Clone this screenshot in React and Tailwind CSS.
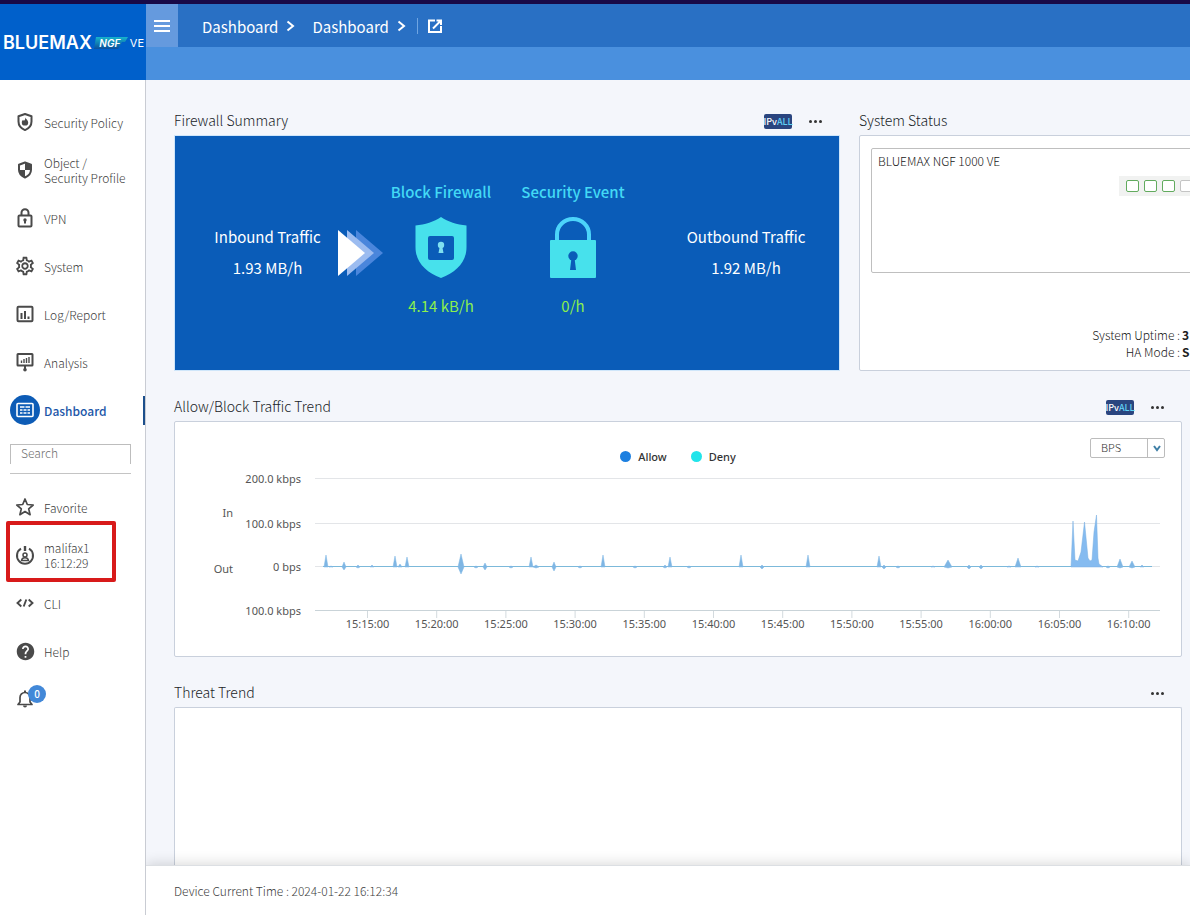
import React, { useState } from "react";
import { MdHelp, MdOutlineSettings } from "react-icons/md";

const stroke = {
  fill: "none",
  stroke: "currentColor",
  strokeWidth: 2,
  strokeLinejoin: "round",
};

const PolicyIcon = () => (
  <svg width="20" height="20" viewBox="0 0 20 20">
    <path d="M10 2l6.5 2.3v5.2c0 4-2.6 7-6.5 8.6-3.9-1.6-6.5-4.6-6.5-8.6V4.300z" {...stroke} />
    <path d="M10.600 5.500c.2 1.600 2.600 2.700 2.600 4.900a3.200 3.200 0 0 1-6.400 0c0-1.200.6-2 1.300-2.700.2.700.5 1 .9 1 .9-.4 1.300-1.800 1.600-3.200z" fill="currentColor" />
  </svg>
);

const ProfileIcon = () => (
  <svg width="20" height="20" viewBox="0 0 20 20">
    <path d="M10 2.500l6 2.300v5c0 3.800-2.400 6.200-6 7.700-3.600-1.500-6-3.900-6-7.700v-5z" {...stroke} />
    <path d="M10 3l6 2v5h-6zM10 10v7.300C6 15.800 4 13.500 4 10z" fill="currentColor" />
  </svg>
);

const LockIcon = () => (
  <svg width="20" height="20" viewBox="0 0 20 20">
    <rect x="3.500" y="7.500" width="13" height="11" rx="1" {...stroke} />
    <path d="M6.500 7V4.800a3.500 3.500 0 0 1 7 0V7" {...stroke} />
    <circle cx="10" cy="12" r="1.700" fill="currentColor" />
    <path d="M10 12v3.500" {...stroke} />
  </svg>
);

const ReportIcon = () => (
  <svg width="20" height="20" viewBox="0 0 20 20">
    <rect x="2.500" y="2.800" width="15" height="14.400" rx="1" {...stroke} />
    <path d="M6.500 9v6M10 7v8M13.500 12.500V15" {...stroke} />
  </svg>
);

const AnalysisIcon = () => (
  <svg width="20" height="20" viewBox="0 0 20 20">
    <rect x="2.500" y="2" width="15" height="11.500" rx="0.500" {...stroke} />
    <path d="M6.500 8.500V11M9 7v4M11.500 6v5M14 5v6" {...stroke} strokeWidth="1.400" />
    <path d="M10 13.500V18" {...stroke} />
    <circle cx="10" cy="17.800" r="1.800" fill="currentColor" />
  </svg>
);

const DashboardIcon = () => (
  <svg width="20" height="20" viewBox="0 0 20 20" className="text-white">
    <rect x="2" y="3.500" width="16" height="13" rx="1" {...stroke} strokeWidth="1.600" />
    <path d="M5 7h4.500M10.500 7H15M5 10h2.500M8.500 10h3M12.500 10H15M5 13h2.500M8.500 13h3M12.500 13H15" {...stroke} strokeWidth="1.400" />
  </svg>
);

const StarIcon = () => (
  <svg width="20" height="20" viewBox="0 0 20 20">
    <path d="M10 2l2.300 5.500 5.900.5-4.500 3.900 1.400 5.800L10 14.600l-5.100 3.100 1.400-5.800L1.800 8l5.900-.5z" {...stroke} strokeWidth="1.700" />
  </svg>
);

const UserPowerIcon = () => (
  <svg width="20" height="20" viewBox="0 0 20 20">
    <path d="M6 3.700a8 8 0 1 0 8 0" {...stroke} />
    <path d="M10 1v5" {...stroke} strokeWidth="2.400" />
    <circle cx="10" cy="10" r="2" {...stroke} strokeWidth="1.500" />
    <path d="M6.500 15.500c.3-2 1.600-2.800 3.500-2.800s3.200.8 3.500 2.800z" {...stroke} strokeWidth="1.500" />
  </svg>
);

const CodeIcon = () => (
  <svg width="20" height="20" viewBox="0 0 20 20">
    <path d="M6.300 6.500L2.500 10l3.800 3.500M13.700 6.500l3.800 3.500-3.800 3.500M11.300 6.500l-2.600 7" {...stroke} strokeWidth="1.900" strokeLinejoin="miter" />
  </svg>
);

const BellIcon = () => (
  <svg width="20" height="20" viewBox="0 0 20 20">
    <path d="M3 15.500h14l-2-2.500V8.500a5 5 0 0 0-10 0V13z" {...stroke} strokeWidth="1.700" />
    <path d="M10 1.500v2" {...stroke} />
    <path d="M8 16.500a2 2 0 0 0 4 0z" fill="currentColor" />
  </svg>
);

const mainMenu = [
  { label: "Security Policy", icon: <PolicyIcon /> },
  { label: "Object /\nSecurity Profile", icon: <ProfileIcon /> },
  { label: "VPN", icon: <LockIcon /> },
  { label: "System", icon: <MdOutlineSettings size={22} /> },
  { label: "Log/Report", icon: <ReportIcon /> },
  { label: "Analysis", icon: <AnalysisIcon /> },
  { label: "Dashboard", icon: <DashboardIcon />, active: true },
];

const userMenu = [
  { label: "Favorite", icon: <StarIcon /> },
  { label: "malifax1\n16:12:29", icon: <UserPowerIcon />, marked: true },
  { label: "CLI", icon: <CodeIcon /> },
  { label: "Help", icon: <MdHelp size={21} /> },
];

const MenuItem = ({ item }) => (
  <li className="relative">
    <a
      href="#"
      className={`flex h-12 items-center gap-1 pl-[10px] text-xs leading-[15px] ${
        item.active ? "font-medium text-[#1c56a8]" : "font-light text-[#404040]"
      }`}
    >
      <span
        className={`flex size-[30px] shrink-0 items-center justify-center rounded-full ${
          item.active ? "bg-[#0d5cb6]" : "text-[#4a4a4a]"
        }`}
      >
        {item.icon}
      </span>
      <span className="whitespace-pre">{item.label}</span>
    </a>
    {item.active && <span className="absolute right-0 top-[10px] h-[29px] w-[2px] bg-[#1c4f8c]" />}
    {item.marked && (
      <span className="absolute -top-[10px] left-[6px] h-[61px] w-[110px] rounded-xs border-4 border-[#d81a1a]" />
    )}
  </li>
);

const Sidebar = () => (
  <aside className="flex w-[146px] shrink-0 flex-col border-r border-[#c9ccd3] bg-white">
    <nav className="pt-[18px]">
      <ul>
        {mainMenu.map((item) => (
          <MenuItem key={item.label} item={item} />
        ))}
      </ul>
    </nav>
    <div className="ml-[10px] mr-[14px] mt-[10px] border-b border-[#c4c4c4] pb-[9px]">
      <input
        type="text"
        aria-label="Search"
        placeholder="Search"
        className="block h-5 w-full border border-b-0 border-[#bdbdbd] px-[10px] pb-1 text-xs font-light leading-none text-[#404040] outline-none placeholder:text-[#707070]"
      />
    </div>
    <ul className="pt-[9px]">
      {userMenu.map((item) => (
        <MenuItem key={item.label} item={item} />
      ))}
      <li>
        <button aria-label="Notifications" className="relative flex h-12 items-center pl-[15px] text-[#4a4a4a]">
          <BellIcon />
          <span className="absolute left-7 top-[10px] flex size-[18px] items-center justify-center rounded-full bg-[#4288d8] text-[10px] font-medium leading-none text-white">
            0
          </span>
        </button>
      </li>
    </ul>
  </aside>
);

const Crumb = ({ children }) => (
  <a href="#" className="flex items-center gap-2">
    {children}
    <svg width="9" height="12" viewBox="0 0 9 12">
      <path d="M1.500 1.500L7 6l-5.500 4.500" fill="none" stroke="currentColor" strokeWidth="2" />
    </svg>
  </a>
);

const Header = () => (
  <header className="flex h-20 shrink-0 border-t-4 border-[#180a48]">
    <div className="flex w-[146px] shrink-0 items-center bg-[#0060cb] pl-[3px] pt-[2px] font-['Inter',sans-serif] text-white">
      <span className="text-lg font-semibold leading-none">BLUEMAX</span>
      <span className="relative flex h-3 w-[36px] shrink-0 items-center justify-center text-[10px] font-semibold italic leading-none">
        <svg viewBox="0 0 36 12" className="absolute inset-0 size-full">
          <defs>
            <linearGradient id="ngf" x1="0" y1="0" x2="0" y2="1">
              <stop offset="0" stopColor="#18b4cc" />
              <stop offset="1" stopColor="#0b4f9c" />
            </linearGradient>
          </defs>
          <path d="M4 0h32l-3 5h-3l-4 7H2z" fill="url(#ngf)" />
        </svg>
        <span className="relative">NGF</span>
      </span>
      <span className="pl-[2px] text-[11px] leading-none">VE</span>
    </div>
    <div className="flex min-w-0 flex-1 items-start bg-[#4a90de]">
      <button aria-label="Toggle menu" className="flex h-[43px] w-8 shrink-0 items-center justify-center bg-[#659ade]">
        <span className="flex w-4 flex-col gap-[3px]">
          <span className="h-[2px] bg-white" />
          <span className="h-[2px] bg-white" />
          <span className="h-[2px] bg-white" />
        </span>
      </button>
      <div className="flex h-[43px] flex-1 items-center gap-[17px] bg-[#2970c4] pl-6 pt-px text-[15px] leading-none text-white">
        <Crumb>Dashboard</Crumb>
        <Crumb>Dashboard</Crumb>
        <a href="#" aria-label="Open in new window" className="-ml-[6px] flex h-4 items-center border-l border-[#6fa5e2] pl-[10px]">
          <svg width="14" height="14" viewBox="0 0 14 14" fill="none" stroke="currentColor" strokeWidth="2">
            <path d="M7 1.500H1V13h12V7" />
            <path d="M8.500 1.500h4.500V6M12.500 2L5 9.500" />
          </svg>
        </a>
      </div>
    </div>
  </header>
);

const Widget = ({ title, badge, menu, className = "", panelClass = "", children }) => (
  <section className={`flex flex-col ${className}`}>
    <div className="flex h-[30px] shrink-0 items-center">
      <h2 className="flex-1 text-sm font-light leading-none text-[#202428]">{title}</h2>
      {badge && (
        <span className="mt-[2px] flex h-[15px] w-7 items-center justify-center rounded-xs bg-[#2a457f] text-[9px] font-medium leading-none text-white">
          IPv<span className="text-[#62d2f5]">ALL</span>
        </span>
      )}
      {menu && (
        <button aria-label={`${title} menu`} className="ml-4 mr-[17px] mt-[2px] flex gap-[2px] p-px">
          <span className="size-[3px] rounded-full bg-[#333]" />
          <span className="size-[3px] rounded-full bg-[#333]" />
          <span className="size-[3px] rounded-full bg-[#333]" />
        </button>
      )}
    </div>
    <div className={`border ${panelClass}`}>{children}</div>
  </section>
);

const Traffic = ({ label, value }) => (
  <div className="flex flex-col items-center gap-[7px] pb-[2px] text-[15px] leading-6 text-white">
    <span>{label}</span>
    <span>{value}</span>
  </div>
);

const Metric = ({ label, value, className, children }) => (
  <div className={`flex shrink-0 flex-col items-center pb-2 text-[15px] leading-6 ${className}`}>
    <span className="whitespace-nowrap font-medium text-[#43d9f5]">{label}</span>
    <div className="mb-4 mt-[13px]">{children}</div>
    <span className="text-[#8cf04c]">{value}</span>
  </div>
);

const FirewallSummary = () => (
  <Widget
    title="Firewall Summary"
    badge
    menu
    className="w-[666px] shrink-0"
    panelClass="flex h-[236px] items-center border-[#cfe6fa] bg-[#0a5cb8]"
  >
    <div className="w-[161px] shrink-0 pl-6">
      <Traffic label="Inbound Traffic" value="1.93 MB/h" />
    </div>
    <svg width="49" height="46" viewBox="0 0 49 46" className="shrink-0">
      <path d="M20 0l27 23-27 23z" fill="#4a86dc" />
      <path d="M11 0l27 23-27 23z" fill="#9cbcf0" />
      <path d="M2 0l27 23L2 46z" fill="#fff" />
    </svg>
    <Metric label="Block Firewall" value="4.14 kB/h" className="w-28">
      <svg width="52" height="61" viewBox="0 0 52 61">
        <path d="M26 0c7 5 16 7.500 25.500 8.500V30c0 15-10 25-25.500 31C10.500 55 .5 45 .5 30V8.500C10 7.500 19 5 26 0z" fill="#47e1ec" />
        <rect x="13" y="19" width="26" height="24" rx="2" fill="#0a5cb8" />
        <circle cx="26" cy="28" r="3.200" fill="#7fe0f0" />
        <path d="M25 28h2l1.500 8h-5z" fill="#7fe0f0" />
      </svg>
    </Metric>
    <Metric label="Security Event" value="0/h" className="w-[152px]">
      <svg width="46" height="61" viewBox="0 0 46 61">
        <path d="M7 25v-7.500a16 15.500 0 0 1 32 0V25" fill="none" stroke="#4cd4fa" strokeWidth="4" />
        <rect y="23" width="46" height="38" rx="1" fill="#47e1ec" />
        <circle cx="23" cy="39" r="4.700" fill="#0a5cb8" />
        <path d="M21.500 41h3l1.500 12h-6z" fill="#0a5cb8" />
      </svg>
    </Metric>
    <div className="flex-1 pl-1">
      <Traffic label="Outbound Traffic" value="1.92 MB/h" />
    </div>
  </Widget>
);

const ports = [true, true, true, false, false, false];

const SystemStatus = () => (
  <Widget
    title="System Status"
    className="w-[560px] shrink-0"
    panelClass="flex h-[236px] flex-col justify-between rounded-xs border-[#c9d0dc] bg-white px-[11px] pb-[10px] pt-3 text-xs font-light text-[#202020]"
  >
    <div className="h-[125px] rounded-xs border border-[#bfbfbf] px-[6px] py-1">
      <p>BLUEMAX NGF 1000 VE</p>
      <div className="ml-[241px] mt-[7px] flex h-5 items-center gap-[5px] bg-[#f1f2f1] pl-[7px]">
        {ports.map((up, index) => (
          <span
            key={index}
            className={`h-3 w-[13px] rounded-xs border bg-white ${up ? "border-[#62ab5e]" : "border-[#c4c4c4]"}`}
          />
        ))}
      </div>
    </div>
    <dl className="grid grid-cols-[309px_1fr] gap-x-[2px] leading-[17px]">
      <dt className="text-right">System Uptime :</dt>
      <dd className="font-bold">3</dd>
      <dt className="text-right">HA Mode :</dt>
      <dd className="font-bold">S</dd>
    </dl>
  </Widget>
);

// Traffic bursts: [x, in, out, half width]
const bursts = [
  [151, 12, 0, 2], [156, 1, 0, 2], [169, 5, 3, 2], [183, 2, 1, 2], [197, 2, 0, 2], [220, 11, 0, 2],
  [225, 3, 0, 2], [232, 10, 0, 2], [286, 13, 7, 3], [301, 1, 1, 2], [310, 4, 3, 2], [336, 1, 1, 2],
  [356, 10, 0, 2], [361, 2, 1, 3], [379, 5, 4, 2], [405, 1, 1, 2], [428, 12, 0, 2], [460, 1, 1, 2],
  [490, 2, 1, 2], [495, 10, 0, 2], [514, 1, 1, 2], [566, 12, 0, 2], [587, 2, 2, 2], [633, 12, 0, 2],
  [704, 11, 0, 2], [709, 2, 2, 2], [723, 1, 1, 2], [758, 1, 0, 2], [773, 7, 1, 4], [794, 2, 2, 2],
  [806, 2, 2, 2], [834, 1, 0, 2], [843, 9, 0, 3], [862, 1, 0, 2], [933, 1, 1, 2], [945, 8, 1, 3],
  [957, 6, 1, 3], [967, 2, 0, 2],
];

const BASE_Y = 97;
const burstPath = bursts
  .map(([x, up, down, w]) => `M${x - w} ${BASE_Y}L${x} ${BASE_Y - up}L${x + w} ${BASE_Y}L${x} ${BASE_Y + down}Z`)
  .join("");

const gridLines = [
  { y: 9, label: "200.0 kbps" },
  { y: 54, label: "100.0 kbps" },
  { y: 97, label: "0 bps" },
  { y: 141, label: "100.0 kbps" },
];

const times = [
  "15:15:00", "15:20:00", "15:25:00", "15:30:00", "15:35:00", "15:40:00",
  "15:45:00", "15:50:00", "15:55:00", "16:00:00", "16:05:00", "16:10:00",
];

const TrafficChart = () => (
  <svg viewBox="0 0 1006 186" className="block w-full font-['Noto_Sans',sans-serif] text-[11px]" fill="#555">
    {gridLines.map(({ y, label }, index) => (
      <g key={index}>
        <path d={`M140 ${y - 0.5}H985`} stroke={index === 3 ? "#c9d3d8" : "#e3e5e8"} />
        <text x="126" y={y + 4} textAnchor="end">
          {label}
        </text>
      </g>
    ))}
    <text x="58" y="47" textAnchor="end">
      In
    </text>
    <text x="58" y="103" textAnchor="end">
      Out
    </text>
    {times.map((time, index) => {
      const x = 192.5 + index * 69.2;
      return (
        <g key={time}>
          <path d={`M${x} 141v7`} stroke="#d3dade" />
          <text x={x} y="158" textAnchor="middle">
            {time}
          </text>
        </g>
      );
    })}
    <path d={`M148 ${BASE_Y - 0.5}H977`} stroke="#7cb9da" />
    <path d={burstPath} fill="#7fb6e4" stroke="#7fb6e4" strokeWidth="0.500" />
    <path
      d="M896 97L898 51L900 90L903 91L906 82L909.500 52L913 88L915 91L917 90L919 62L921.500 45L923 88L924 94L928 97Z"
      fill="#85bbf0"
      stroke="#79afe0"
      strokeWidth="0.500"
    />
  </svg>
);

const TrafficTrend = () => {
  const [unit, setUnit] = useState("BPS");

  return (
    <Widget
      title="Allow/Block Traffic Trend"
      badge
      menu
      className="shrink-0"
      panelClass="rounded-xs border-[#c9d0dc] bg-white pt-4"
    >
      <div className="grid h-8 grid-cols-[1fr_auto_1fr] px-4">
        <ul className="col-start-2 flex items-center gap-6 pt-1 font-['Noto_Sans',sans-serif] text-[11px] font-medium leading-none text-[#333]">
          <li className="flex items-center gap-[7px]">
            <span className="size-[11px] rounded-full bg-[#1c7fe0]" />
            Allow
          </li>
          <li className="flex items-center gap-[7px]">
            <span className="size-[11px] rounded-full bg-[#22e4ea]" />
            Deny
          </li>
        </ul>
        <div className="relative h-5 w-[75px] justify-self-end">
          <select
            aria-label="Traffic unit"
            value={unit}
            onChange={(e) => setUnit(e.target.value)}
            className="block h-5 w-full appearance-none rounded-xs border border-[#bcbcbc] bg-white pb-[3px] pl-[10px] text-[11px] font-light leading-4 text-[#303030]"
          >
            <option>BPS</option>
          </select>
          <span className="pointer-events-none absolute inset-y-0 right-0 flex w-[18px] items-center justify-center border-l border-[#bcbcbc]">
            <svg width="8" height="7" viewBox="0 0 8 7">
              <path d="M1 1l3 4 3-4" fill="none" stroke="#3f7fa6" strokeWidth="2" />
            </svg>
          </span>
        </div>
      </div>
      <TrafficChart />
    </Widget>
  );
};

const App = () => (
  <div className="flex h-screen flex-col overflow-hidden bg-[#f4f6fb] font-['Noto_Sans_CJK_KR','Noto_Sans',sans-serif]">
    <Header />
    <div className="flex min-h-0 flex-1">
      <Sidebar />
      <div className="flex min-w-0 flex-1 flex-col overflow-hidden">
        <main className="flex min-h-0 flex-1 flex-col gap-5 overflow-hidden pl-7 pr-2 pt-[25px]">
          <div className="flex shrink-0 gap-[19px]">
            <FirewallSummary />
            <SystemStatus />
          </div>
          <TrafficTrend />
          <Widget
            title="Threat Trend"
            menu
            className="min-h-0 flex-1"
            panelClass="flex-1 rounded-t-xs border-b-0 border-[#c9d0dc] bg-white"
          />
        </main>
        <footer className="relative flex h-[50px] shrink-0 items-center border-t border-[#dcdfe3] bg-white pl-7 text-xs font-light text-[#404040] shadow-[0_-2px_12px_rgba(0,0,0,0.14)]">
          Device Current Time : 2024-01-22 16:12:34
        </footer>
      </div>
    </div>
  </div>
);

export default App;
